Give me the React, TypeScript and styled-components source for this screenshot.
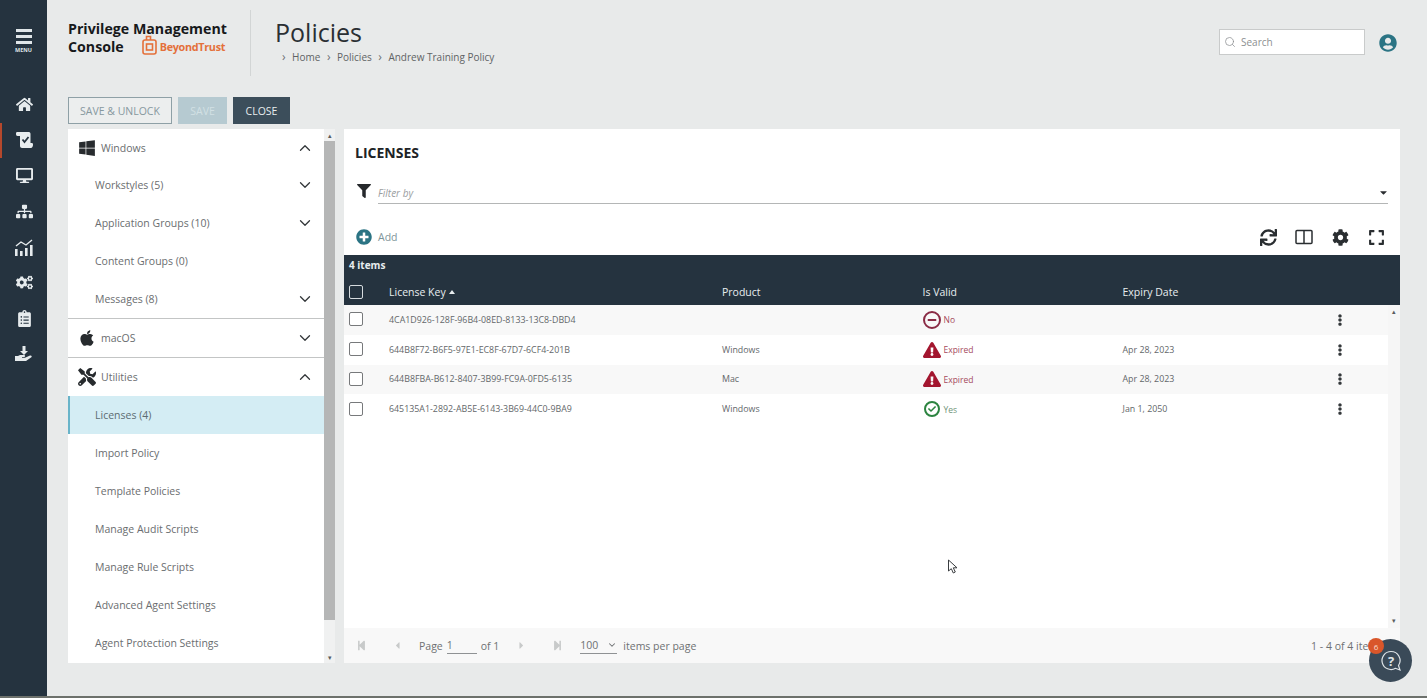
import React from "react";
import styled, { createGlobalStyle, css } from "styled-components";
import {
  FaApple,
  FaCaretDown,
  FaCheck,
  FaClipboardList,
  FaCog,
  FaCogs,
  FaDesktop,
  FaEllipsisV,
  FaExclamationTriangle,
  FaExpand,
  FaFilter,
  FaHome,
  FaMinus,
  FaPlusCircle,
  FaSitemap,
  FaStepBackward,
  FaStepForward,
  FaCaretLeft,
  FaCaretRight,
  FaSync,
  FaTools,
  FaUserCircle,
  FaWindows,
} from "react-icons/fa";
import { ChevronDown, ChevronUp, Search as SearchIcon } from "lucide-react";

const GlobalStyle = createGlobalStyle`
  html, body {
    margin: 0;
    padding: 0;
    height: 100%;
    overflow: hidden;
    background: #e8eaea;
    font-family: "Open Sans", "Liberation Sans", sans-serif;
  }
  * { box-sizing: border-box; }
`;

const Page = styled.div`
  position: relative;
  display: flex;
  width: 1427px;
  height: 698px;
  border-bottom: 2px solid #6d716c;
  overflow: hidden;
`;

const Rail = styled.nav`
  width: 47px;
  flex: none;
  background: #25333f;
  color: #e9eef0;
  padding-top: 29px;
`;

const MenuButton = styled.div`
  display: flex;
  flex-direction: column;
  align-items: center;
  height: 58px;
`;

const MenuBar = styled.span`
  width: 16px;
  height: 3px;
  margin-bottom: 3px;
  background: #dfe5e8;
`;

const MenuLabel = styled.span`
  font-size: 5.5px;
  font-weight: 700;
  line-height: 7px;
  color: #dfe5e8;
`;

const RailItem = styled.div<{ $active?: boolean }>`
  display: flex;
  align-items: center;
  justify-content: center;
  height: 35.6px;
  font-size: 17px;
  border-left: 2px solid ${({ $active }) => ($active ? "#b5482c" : "transparent")};
  padding-right: 1px;
  color: #e6ebed;
`;

const Content = styled.main`
  flex: 1;
  min-width: 0;
  padding: 0 27px 0 21px;
`;

const Header = styled.header`
  display: flex;
  align-items: flex-start;
  height: 97px;
`;

const Brand = styled.div`
  width: 183px;
  height: 66px;
  margin-top: 10px;
  padding-top: 10px;
  border-right: 1px solid #d2d5d5;
  color: #17191b;
  font-size: 14.2px;
  font-weight: 700;
  line-height: 17px;
`;

const BrandRow = styled.div`
  display: flex;
  align-items: center;
`;

const LogoMark = styled.svg`
  margin-left: 18px;
  margin-top: -2px;
`;

const LogoText = styled.span`
  margin-left: 3px;
  color: #e4703a;
  font-size: 10.8px;
  font-weight: 700;
  letter-spacing: -0.3px;
`;

const TitleBlock = styled.div`
  padding: 14px 0 0 24px;
`;

const Title = styled.h1`
  margin: 0;
  color: #2a2f33;
  font-size: 25px;
  font-weight: 400;
  line-height: 36px;
`;

const Crumbs = styled.div`
  display: flex;
  align-items: center;
  gap: 6.5px;
  margin: 0 0 0 7px;
  color: #5f6365;
  font-size: 10px;
  line-height: 14px;
`;

const CrumbArrow = styled.span`
  color: #6f7274;
  font-size: 12px;
  line-height: 12px;
`;

const HeaderRight = styled.div`
  display: flex;
  align-items: center;
  margin-left: auto;
  margin-top: 29px;
`;

const SearchBox = styled.div`
  display: flex;
  align-items: center;
  gap: 5px;
  width: 146px;
  height: 26px;
  padding-left: 4px;
  background: #fff;
  border: 1px solid #c9cbcb;
  color: #8c8f91;
  font-size: 10px;
`;

const UserIcon = styled(FaUserCircle)`
  margin: 2px 3px 0 14px;
  color: #2b7484;
  font-size: 18px;
`;

const Toolbar = styled.div`
  display: flex;
  gap: 6px;
  height: 27px;
  margin-bottom: 5px;
`;

const ActionButton = styled.button<{ $kind: "outline" | "disabled" | "dark" }>`
  height: 27px;
  padding: 0;
  font-family: inherit;
  font-size: 10.5px;
  ${({ $kind }) =>
    $kind === "outline" &&
    css`
      width: 104px;
      background: #eceeee;
      border: 1px solid #8ea0a6;
      color: #87989e;
    `}
  ${({ $kind }) =>
    $kind === "disabled" &&
    css`
      width: 49px;
      background: #b6cad1;
      border: 0;
      color: #d2e0e4;
    `}
  ${({ $kind }) =>
    $kind === "dark" &&
    css`
      width: 57px;
      background: #3c4e5b;
      border: 0;
      color: #e8edef;
    `}
`;

const Panels = styled.div`
  display: flex;
  height: 534px;
`;

const TreePanel = styled.aside`
  width: 256px;
  background: #fff;
`;

const TreeRow = styled.div<{ $section?: boolean; $active?: boolean; $divider?: boolean; $first?: boolean }>`
  display: flex;
  align-items: center;
  height: ${({ $first }) => ($first ? "37px" : "38px")};
  padding: 0 11px 0 ${({ $section }) => ($section ? "9px" : "27px")};
  color: #6a6d6f;
  font-size: 10.5px;
  ${({ $divider }) =>
    $divider &&
    css`
      height: 39px;
      border-top: 1px solid #c3c5c5;
    `}
  ${({ $active }) =>
    $active &&
    css`
      padding-left: 25px;
      background: #d4edf4;
      border-left: 2px solid #69b4c9;
      color: #5d6c72;
    `}
`;

const TreeIcon = styled.span`
  display: flex;
  justify-content: center;
  width: 19px;
  margin-right: 5px;
  color: #272b2e;
  font-size: 18px;
`;

const Chevron = styled.span`
  display: flex;
  margin-left: auto;
  margin-right: -1px;
  color: #33373a;
`;

const TreeScroll = styled.div`
  display: flex;
  flex-direction: column;
  width: 11px;
  margin-right: 9px;
  background: #f0f1f1;
`;

const ScrollArrow = styled.div`
  display: flex;
  justify-content: center;
  align-items: center;
  flex: none;
  height: 12px;
  color: #5a5d5f;
  font-size: 7px;
`;

const ScrollThumb = styled.div`
  height: 479px;
  background: #b5b6b6;
`;

const ScrollGap = styled.div`
  flex: 1;
`;

const ListPanel = styled.section`
  display: flex;
  flex-direction: column;
  flex: 1;
  min-width: 0;
  background: #fff;
`;

const PanelTitle = styled.h2`
  height: 48px;
  margin: 0;
  padding: 14px 0 0 11px;
  color: #202326;
  font-size: 14px;
  font-weight: 700;
  line-height: 20px;
`;

const FilterRow = styled.div`
  display: flex;
  align-items: flex-end;
  height: 27px;
  padding: 0 12px 0 13px;
`;

const FilterIcon = styled(FaFilter)`
  margin-right: 7px;
  margin-bottom: 6px;
  color: #26292c;
  font-size: 14px;
`;

const FilterInput = styled.div`
  display: flex;
  align-items: flex-end;
  justify-content: space-between;
  flex: 1;
  height: 27px;
  padding-bottom: 3px;
  border-bottom: 1px solid #b4b6b6;
  color: #9b9e9f;
  font-size: 10px;
  font-style: italic;
`;

const FilterCaret = styled(FaCaretDown)`
  margin-right: -1px;
  margin-bottom: 2px;
  color: #2a2d30;
  font-size: 11px;
`;

const ActionRow = styled.div`
  display: flex;
  align-items: center;
  height: 51px;
  padding: 15px 15px 0 12px;
`;

const AddIcon = styled(FaPlusCircle)`
  margin-right: 6px;
  color: #2b7484;
  font-size: 16px;
`;

const AddLabel = styled.span`
  color: #7e9499;
  font-size: 10.5px;
`;

const TableTools = styled.div`
  display: flex;
  align-items: center;
  gap: 18px;
  margin-left: auto;
  color: #2a2e31;
  font-size: 17px;
`;

const ToolIcon = styled.span`
  display: flex;
  justify-content: center;
  width: 18px;
`;

const TableHead = styled.div`
  flex: none;
  height: 50px;
  background: #25333f;
  color: #e8edef;
`;

const ItemCount = styled.div`
  height: 23px;
  padding: 3px 0 0 5px;
  font-size: 10px;
  font-weight: 700;
  line-height: 15px;
`;

const columns = css`
  display: grid;
  grid-template-columns: 45px 333px 200.5px 200px 205px 24px;
  align-items: center;
`;

const HeadRow = styled.div`
  ${columns}
  height: 27px;
  font-size: 10.5px;
`;

const SortMark = styled.span`
  display: inline-block;
  margin-left: 3px;
  vertical-align: 2px;
  border-left: 3px solid transparent;
  border-right: 3px solid transparent;
  border-bottom: 4px solid #e8edef;
`;

const Check = styled.span<{ $head?: boolean }>`
  display: block;
  width: 14px;
  height: 14px;
  margin: ${({ $head }) => ($head ? "0" : "-1px")} 0 0 5px;
  background: ${({ $head }) => ($head ? "transparent" : "#fff")};
  border: 1px solid ${({ $head }) => ($head ? "#d5dbde" : "#77797b")};
  border-radius: 2px;
`;

const TableBody = styled.div`
  display: flex;
  flex: 1;
  min-height: 0;
`;

const Rows = styled.div`
  flex: 1;
`;

const Row = styled.div<{ $odd: boolean }>`
  ${columns}
  height: 29.75px;
  background: ${({ $odd }) => ($odd ? "#f8f8f8" : "#fff")};
  color: #63676a;
  font-size: 8.85px;
`;

const BodyScroll = styled.div`
  display: flex;
  flex-direction: column;
  justify-content: space-between;
  flex: none;
  width: 12px;
  padding-bottom: 2px;
  background: #f6f6f6;
`;

const Status = styled.span<{ $tone: "bad" | "good" }>`
  display: flex;
  align-items: center;
  gap: 3px;
  font-size: 8.5px;
  color: ${({ $tone }) => ($tone === "good" ? "#6f9478" : "#a5495c")};
`;

const NoBadge = styled.span`
  display: flex;
  align-items: center;
  justify-content: center;
  width: 18px;
  height: 18px;
  border: 2px solid #8a2b45;
  border-radius: 50%;
  color: #8a2b45;
  font-size: 10px;
`;

const YesBadge = styled.span`
  display: flex;
  align-items: center;
  justify-content: center;
  width: 16px;
  height: 16px;
  margin: 0 1px;
  border: 2px solid #2c8440;
  border-radius: 50%;
  color: #2c8440;
  font-size: 8px;
`;

const WarnIcon = styled(FaExclamationTriangle)`
  color: #a3162f;
  font-size: 18px;
`;

const Kebab = styled(FaEllipsisV)`
  justify-self: center;
  color: #33373a;
  font-size: 12px;
`;

const Pager = styled.footer`
  display: flex;
  align-items: center;
  flex: none;
  height: 35px;
  padding: 0 17px 0 12px;
  background: #f8f8f8;
  color: #6e7173;
  font-size: 10.5px;
`;

const PagerArrow = styled.span<{ $width: number; $indent?: number }>`
  display: flex;
  width: ${({ $width }) => $width}px;
  padding-left: ${({ $indent }) => $indent ?? 0}px;
  color: #c8caca;
  font-size: 11px;
`;

const PageInput = styled.span`
  width: 30px;
  margin: 0 4px;
  border-bottom: 1px solid #8f9294;
  line-height: 15px;
`;

const PageSize = styled.span`
  display: flex;
  align-items: center;
  justify-content: space-between;
  width: 37px;
  margin-right: 6px;
  border-bottom: 1px solid #8f9294;
  line-height: 15px;
`;

const PagerTotal = styled.span`
  margin-left: auto;
`;

const HelpButton = styled.div`
  position: absolute;
  left: 1369px;
  top: 639px;
  display: flex;
  align-items: center;
  justify-content: center;
  width: 43px;
  height: 43px;
  border-radius: 50%;
  background: #3a4a58;
`;

const HelpBadge = styled.span`
  position: absolute;
  left: -1px;
  top: -1px;
  display: flex;
  align-items: center;
  justify-content: center;
  width: 16px;
  height: 16px;
  border-radius: 50%;
  background: #d9562a;
  color: #f8dccf;
  font-size: 8px;
`;

const Pointer = styled.svg`
  position: absolute;
  left: 947px;
  top: 559px;
`;

const Logo = () => (
  <LogoMark width="15" height="20" viewBox="0 0 15 20" fill="none" stroke="#e4703a" strokeWidth="1.6">
    <rect x="1" y="5" width="13" height="14" rx="2" />
    <rect x="4.5" y="9" width="6" height="6" />
    <path d="M4.5 5V1.500h4V5" />
  </LogoMark>
);

const ScrollCheckIcon = () => (
  <svg width="17" height="16" viewBox="0 0 17 16">
    <path d="M1 0h12c1 0 1.500 1 1.500 2v9H16c1 0 1 1 1 2s-1 3-2 3H6c-1 0-2-1-2-2V4H1.500C.5 4 0 3 0 2s0-2 1-2z" fill="#e8edef" />
    <path d="M6.500 7.500l2 2.500 4-5" fill="none" stroke="#25333f" strokeWidth="1.800" />
  </svg>
);

const ChartIcon = () => (
  <svg width="18" height="17" viewBox="0 0 18 17" fill="#e6ebed">
    <rect x="0" y="10" width="2.600" height="7" />
    <rect x="5" y="12" width="2.600" height="5" />
    <rect x="10" y="9" width="2.600" height="8" />
    <rect x="15" y="6" width="2.600" height="11" />
    <path d="M1 7l5-4 5 3 6-5" fill="none" stroke="#e6ebed" strokeWidth="1.400" />
  </svg>
);

const HandIcon = () => (
  <svg width="18" height="16" viewBox="0 0 18 16" fill="#e6ebed">
    <path d="M7.500 0h3v5h2.500L9 9 5 5h2.500z" />
    <path d="M0 10h3l2-1h4c1.500 0 1.500 2 0 2H7v.8h3l5-2.300c1.500-.5 2.500 1 1 2l-5 3.500H3l-3 0z" />
  </svg>
);

const ColumnsIcon = () => (
  <svg width="18" height="16" viewBox="0 0 18 16" fill="none" stroke="#2a2e31" strokeWidth="1.500">
    <rect x="1" y="1.500" width="16" height="13" rx="1" />
    <path d="M9 1.500v13" />
  </svg>
);

const HelpGlyph = () => (
  <svg width="24" height="24" viewBox="0 0 24 24" fill="none" stroke="#dfe5e8" strokeWidth="1.200">
    <path d="M12 2.500a9 9 0 1 0 4.500 16.800l4.500 1.700-1.500-4.500A9 9 0 0 0 12 2.500z" />
    <text x="12" y="16.500" textAnchor="middle" fontSize="13" fontWeight="700" fill="#dfe5e8" stroke="none">
      ?
    </text>
  </svg>
);

const railItems = [
  { key: "home", icon: <FaHome /> },
  { key: "policies", icon: <ScrollCheckIcon />, active: true },
  { key: "computers", icon: <FaDesktop /> },
  { key: "groups", icon: <FaSitemap /> },
  { key: "analytics", icon: <ChartIcon /> },
  { key: "settings", icon: <FaCogs /> },
  { key: "tasks", icon: <FaClipboardList /> },
  { key: "deploy", icon: <HandIcon /> },
];

const windowsItems = [
  { label: "Workstyles (5)", more: true },
  { label: "Application Groups (10)", more: true },
  { label: "Content Groups (0)", more: false },
  { label: "Messages (8)", more: true },
];

const utilityItems = [
  "Licenses (4)",
  "Import Policy",
  "Template Policies",
  "Manage Audit Scripts",
  "Manage Rule Scripts",
  "Advanced Agent Settings",
  "Agent Protection Settings",
];

type Licence = {
  key: string;
  product: string;
  valid: "no" | "expired" | "yes";
  expiry: string;
};

const licences: Licence[] = [
  { key: "4CA1D926-128F-96B4-08ED-8133-13C8-DBD4", product: "", valid: "no", expiry: "" },
  { key: "644B8F72-B6F5-97E1-EC8F-67D7-6CF4-201B", product: "Windows", valid: "expired", expiry: "Apr 28, 2023" },
  { key: "644B8FBA-B612-8407-3B99-FC9A-0FD5-6135", product: "Mac", valid: "expired", expiry: "Apr 28, 2023" },
  { key: "645135A1-2892-AB5E-6143-3B69-44C0-9BA9", product: "Windows", valid: "yes", expiry: "Jan 1, 2050" },
];

const ValidCell = ({ valid }: { valid: Licence["valid"] }) => {
  if (valid === "no") {
    return (
      <Status $tone="bad">
        <NoBadge>
          <FaMinus />
        </NoBadge>
        No
      </Status>
    );
  }
  if (valid === "expired") {
    return (
      <Status $tone="bad">
        <WarnIcon />
        Expired
      </Status>
    );
  }
  return (
    <Status $tone="good">
      <YesBadge>
        <FaCheck />
      </YesBadge>
      Yes
    </Status>
  );
};

const App: React.FC = () => {
  return (
    <Page>
      <GlobalStyle />
      <Rail>
        <MenuButton>
          <MenuBar />
          <MenuBar />
          <MenuBar />
          <MenuLabel>MENU</MenuLabel>
        </MenuButton>
        {railItems.map((item) => (
          <RailItem key={item.key} $active={item.active}>
            {item.icon}
          </RailItem>
        ))}
      </Rail>

      <Content>
        <Header>
          <Brand>
            <div>Privilege Management</div>
            <BrandRow>
              Console
              <Logo />
              <LogoText>BeyondTrust</LogoText>
            </BrandRow>
          </Brand>
          <TitleBlock>
            <Title>Policies</Title>
            <Crumbs>
              <CrumbArrow>›</CrumbArrow>
              <span>Home</span>
              <CrumbArrow>›</CrumbArrow>
              <span>Policies</span>
              <CrumbArrow>›</CrumbArrow>
              <span>Andrew Training Policy</span>
            </Crumbs>
          </TitleBlock>
          <HeaderRight>
            <SearchBox>
              <SearchIcon size={12} strokeWidth={1.5} />
              Search
            </SearchBox>
            <UserIcon />
          </HeaderRight>
        </Header>

        <Toolbar>
          <ActionButton $kind="outline">SAVE &amp; UNLOCK</ActionButton>
          <ActionButton $kind="disabled">SAVE</ActionButton>
          <ActionButton $kind="dark">CLOSE</ActionButton>
        </Toolbar>

        <Panels>
          <TreePanel>
            <TreeRow $section $first>
              <TreeIcon>
                <FaWindows />
              </TreeIcon>
              Windows
              <Chevron>
                <ChevronUp size={18} strokeWidth={1.7} />
              </Chevron>
            </TreeRow>
            {windowsItems.map((item) => (
              <TreeRow key={item.label}>
                {item.label}
                {item.more && (
                  <Chevron>
                    <ChevronDown size={18} strokeWidth={1.7} />
                  </Chevron>
                )}
              </TreeRow>
            ))}
            <TreeRow $section $divider>
              <TreeIcon>
                <FaApple />
              </TreeIcon>
              macOS
              <Chevron>
                <ChevronDown size={18} strokeWidth={1.7} />
              </Chevron>
            </TreeRow>
            <TreeRow $section $divider>
              <TreeIcon>
                <FaTools />
              </TreeIcon>
              Utilities
              <Chevron>
                <ChevronUp size={18} strokeWidth={1.7} />
              </Chevron>
            </TreeRow>
            {utilityItems.map((label, index) => (
              <TreeRow key={label} $active={index === 0}>
                {label}
              </TreeRow>
            ))}
          </TreePanel>
          <TreeScroll>
            <ScrollArrow>▴</ScrollArrow>
            <ScrollThumb />
            <ScrollGap />
            <ScrollArrow>▾</ScrollArrow>
          </TreeScroll>

          <ListPanel>
            <PanelTitle>LICENSES</PanelTitle>
            <FilterRow>
              <FilterIcon />
              <FilterInput>
                Filter by
                <FilterCaret />
              </FilterInput>
            </FilterRow>
            <ActionRow>
              <AddIcon />
              <AddLabel>Add</AddLabel>
              <TableTools>
                <ToolIcon>
                  <FaSync />
                </ToolIcon>
                <ToolIcon>
                  <ColumnsIcon />
                </ToolIcon>
                <ToolIcon>
                  <FaCog />
                </ToolIcon>
                <ToolIcon>
                  <FaExpand />
                </ToolIcon>
              </TableTools>
            </ActionRow>
            <TableHead>
              <ItemCount>4 items</ItemCount>
              <HeadRow>
                <Check $head />
                <span>
                  License Key
                  <SortMark />
                </span>
                <span>Product</span>
                <span>Is Valid</span>
                <span>Expiry Date</span>
              </HeadRow>
            </TableHead>
            <TableBody>
              <Rows>
                {licences.map((licence, index) => (
                  <Row key={licence.key} $odd={index % 2 === 0}>
                    <Check />
                    <span>{licence.key}</span>
                    <span>{licence.product}</span>
                    <ValidCell valid={licence.valid} />
                    <span>{licence.expiry}</span>
                    <Kebab />
                  </Row>
                ))}
              </Rows>
              <BodyScroll>
                <ScrollArrow>▴</ScrollArrow>
                <ScrollArrow>▾</ScrollArrow>
              </BodyScroll>
            </TableBody>
            <Pager>
              <PagerArrow $width={36}>
                <FaStepBackward />
              </PagerArrow>
              <PagerArrow $width={27}>
                <FaCaretLeft />
              </PagerArrow>
              Page
              <PageInput>1</PageInput>
              of 1
              <PagerArrow $width={53} $indent={17}>
                <FaCaretRight />
              </PagerArrow>
              <PagerArrow $width={28}>
                <FaStepForward />
              </PagerArrow>
              <PageSize>
                100
                <ChevronDown size={10} strokeWidth={2.5} />
              </PageSize>
              items per page
              <PagerTotal>1 - 4 of 4 items</PagerTotal>
            </Pager>
          </ListPanel>
        </Panels>
      </Content>

      <Pointer width="12" height="16" viewBox="0 0 12 16" fill="#fff" stroke="#3a3d40" strokeWidth="1">
        <path d="M1.500 1v11l2.800-2.300 2 4.300 2-1-2-4.200h3.700z" />
      </Pointer>

      <HelpButton>
        <HelpGlyph />
        <HelpBadge>6</HelpBadge>
      </HelpButton>
    </Page>
  );
};

export default App;
